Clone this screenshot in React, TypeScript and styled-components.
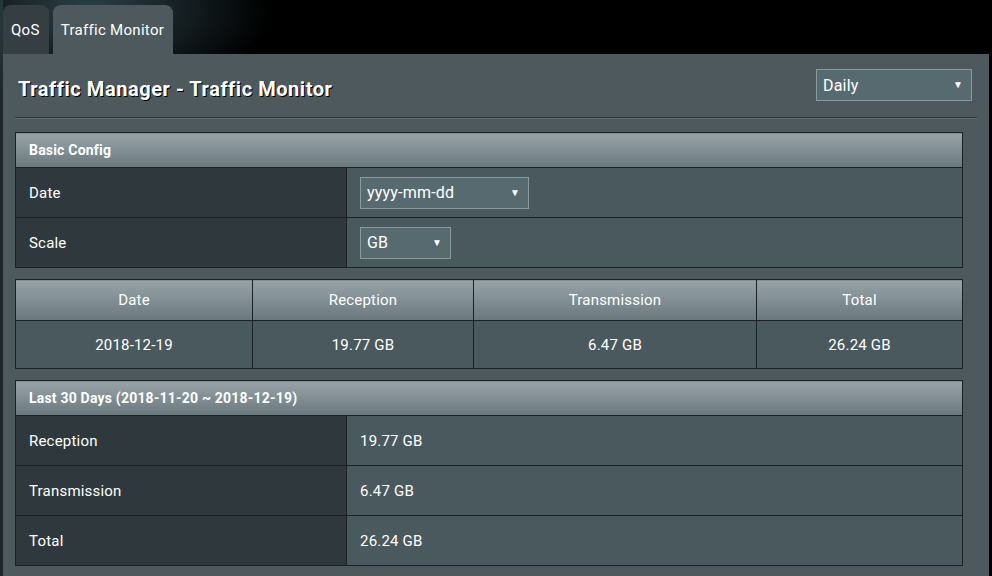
import React from 'react';
import styled, { createGlobalStyle } from 'styled-components';

const GlobalStyle = createGlobalStyle`
  html, body {
    margin: 0;
    padding: 0;
    background: #000;
  }
  body {
    font-family: Roboto, "Open Sans", "Liberation Sans", sans-serif;
    color: #fff;
  }
`;

const Page = styled.div`
  min-height: 100vh;
  background:
    radial-gradient(ellipse 180px 90px at 90px 10px, rgba(48, 72, 80, 0.9), rgba(0, 0, 0, 0) 100%),
    linear-gradient(to right, #1f272a 0, #1f272a 3px, #000 3px);
  display: flex;
  flex-direction: column;
`;

const TabBar = styled.div`
  display: flex;
  gap: 4px;
  padding: 5px 0 0 3px;
  height: 49px;
`;

const Tab = styled.div<{ $active?: boolean }>`
  display: flex;
  align-items: center;
  padding: 0 9px 0 8px;
  border-radius: 8px 8px 0 0;
  font-size: 15px;
  letter-spacing: 0.3px;
  background: ${(p) => (p.$active ? '#4d595d' : '#353f43')};
  color: #fff;
`;

const Panel = styled.div`
  flex: 1;
  margin: 0 3px;
  background: #4d595d;
  padding: 15px 12px 12px 12px;
`;

const HeaderRow = styled.div`
  display: flex;
  justify-content: space-between;
  align-items: center;
  padding: 0 5px 0 3px;
`;

const Title = styled.h1`
  margin: 0;
  padding-top: 8px;
  font-size: 20px;
  font-weight: 700;
  letter-spacing: 0.55px;
  text-shadow: 1px 1px 0 #000;
`;

const Select = styled.div<{ $w: number; $h?: number }>`
  width: ${(p) => p.$w}px;
  height: ${(p) => p.$h ?? 32}px;
  box-sizing: border-box;
  display: flex;
  align-items: center;
  justify-content: space-between;
  padding: 0 8px 0 6px;
  background: #576a6f;
  border: 1px solid #8a9b9f;
  font-size: 16px;
  letter-spacing: 0.2px;
  color: #fff;
`;

const Caret = styled.span`
  font-size: 10px;
  line-height: 1;
`;

const Divider = styled.div`
  height: 0;
  border-top: 1px solid #2c3639;
  border-bottom: 1px solid #5e6b6f;
  margin: 16px 0 13px;
`;

const Table = styled.table`
  width: 948px;
  border-collapse: collapse;
  margin-bottom: 11px;
  font-size: 15px;
  letter-spacing: 0.2px;
  border: 1px solid #1b2225;
`;

const HeadCell = styled.th<{ $h?: number; $left?: boolean; $w?: number }>`
  height: ${(p) => p.$h ?? 34}px;
  ${(p) => (p.$w ? `width: ${p.$w}px;` : '')}
  padding: 0 13px;
  border: 1px solid #1b2225;
  background: linear-gradient(to bottom, #97a3a8, #6a787d);
  text-align: ${(p) => (p.$left ? 'left' : 'center')};
  font-weight: ${(p) => (p.$left ? 700 : 400)};
  font-size: ${(p) => (p.$left ? '14px' : '15px')};
  color: #fff;
`;

const LabelCell = styled.td`
  width: 304px;
  height: 49px;
  padding: 0 13px;
  background: #2f393d;
  border: 1px solid #1b2225;
`;

const ValueCell = styled.td<{ $center?: boolean; $h?: number }>`
  height: ${(p) => p.$h ?? 49}px;
  padding: 0 13px;
  background: #4a595e;
  border: 1px solid #1b2225;
  text-align: ${(p) => (p.$center ? 'center' : 'left')};
`;

export default function App() {
  const last30 = [
    ['Reception', '19.77 GB'],
    ['Transmission', '6.47 GB'],
    ['Total', '26.24 GB'],
  ];
  return (
    <Page>
      <GlobalStyle />
      <TabBar>
        <Tab>QoS</Tab>
        <Tab $active>Traffic Monitor</Tab>
      </TabBar>
      <Panel>
        <HeaderRow>
          <Title>Traffic Manager - Traffic Monitor</Title>
          <Select $w={156}>
            Daily
            <Caret>▼</Caret>
          </Select>
        </HeaderRow>
        <Divider />

        <Table>
          <thead>
            <tr>
              <HeadCell colSpan={2} $left>Basic Config</HeadCell>
            </tr>
          </thead>
          <tbody>
            <tr>
              <LabelCell>Date</LabelCell>
              <ValueCell>
                <Select $w={169}>
                  yyyy-mm-dd
                  <Caret>▼</Caret>
                </Select>
              </ValueCell>
            </tr>
            <tr>
              <LabelCell>Scale</LabelCell>
              <ValueCell>
                <Select $w={91}>
                  GB
                  <Caret>▼</Caret>
                </Select>
              </ValueCell>
            </tr>
          </tbody>
        </Table>

        <Table>
          <thead>
            <tr>
              <HeadCell $h={40} $w={210}>Date</HeadCell>
              <HeadCell $h={40} $w={194}>Reception</HeadCell>
              <HeadCell $h={40} $w={256}>Transmission</HeadCell>
              <HeadCell $h={40}>Total</HeadCell>
            </tr>
          </thead>
          <tbody>
            <tr>
              <ValueCell $center $h={47}>2018-12-19</ValueCell>
              <ValueCell $center $h={47}>19.77 GB</ValueCell>
              <ValueCell $center $h={47}>6.47 GB</ValueCell>
              <ValueCell $center $h={47}>26.24 GB</ValueCell>
            </tr>
          </tbody>
        </Table>

        <Table>
          <thead>
            <tr>
              <HeadCell colSpan={2} $left>Last 30 Days (2018-11-20 ~ 2018-12-19)</HeadCell>
            </tr>
          </thead>
          <tbody>
            {last30.map(([k, v]) => (
              <tr key={k}>
                <LabelCell>{k}</LabelCell>
                <ValueCell>{v}</ValueCell>
              </tr>
            ))}
          </tbody>
        </Table>
      </Panel>
    </Page>
  );
}
